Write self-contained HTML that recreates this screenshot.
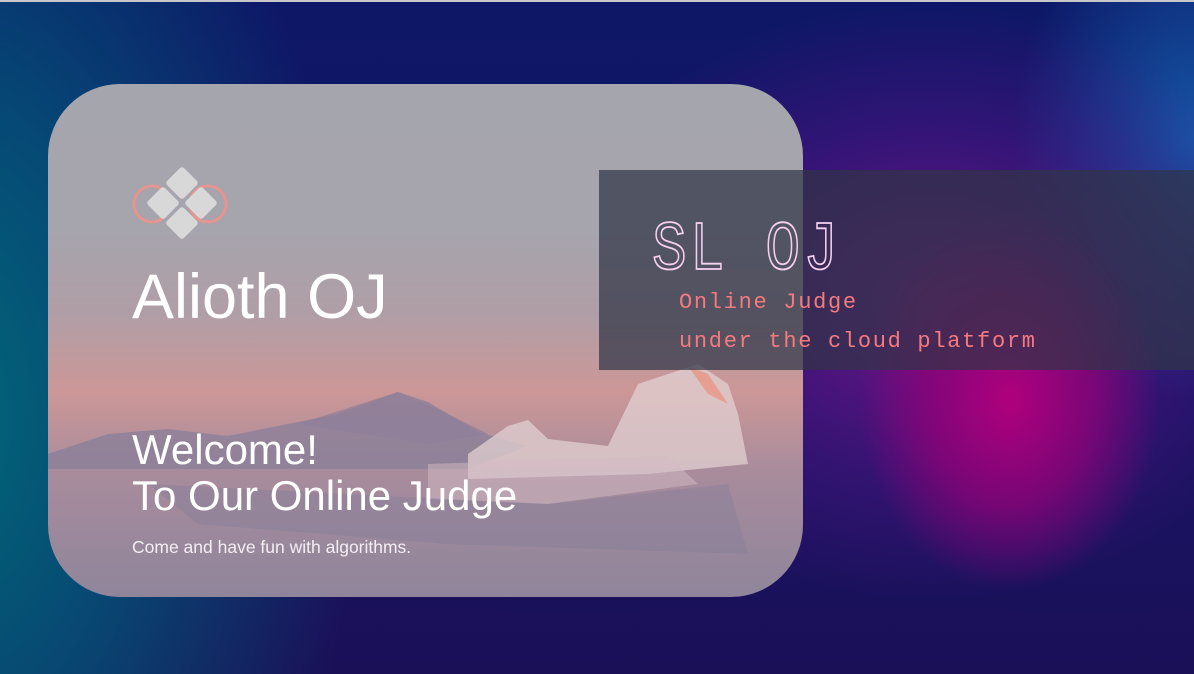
<!DOCTYPE html>
<html><head><meta charset="utf-8"><style>
html,body{margin:0;padding:0}
body{width:1194px;height:674px;overflow:hidden;position:relative;font-family:"Liberation Sans",sans-serif;
background:
radial-gradient(ellipse 150px 190px at 1010px 400px,rgba(175,0,125,1),rgba(150,0,120,0.7) 55%,rgba(100,0,110,0) 100%),
radial-gradient(ellipse 380px 300px at 930px 300px,rgba(120,20,140,0.9),rgba(90,20,140,0.4) 60%,rgba(80,20,130,0) 100%),
radial-gradient(ellipse 180px 260px at 1194px 140px,rgba(20,90,170,0.95),rgba(20,90,170,0) 100%),
radial-gradient(ellipse 420px 700px at -60px 420px,rgba(0,105,120,1),rgba(0,95,125,0.7) 45%,rgba(10,70,120,0) 100%),
linear-gradient(180deg,#0d1766 0%,#1a1566 50%,#1a1058 100%);}
.top{position:absolute;left:0;top:0;width:1194px;height:2px;background:#c8c8cc}
.card{position:absolute;left:48px;top:84px;width:755px;height:513px;border-radius:72px;overflow:hidden;
background:linear-gradient(180deg,#a5a5ad 0%,#a6a4ad 28%,#b09ea6 45%,#cc9797 60%,#a98c9c 75%,#8f859b 100%)}
.panel{position:absolute;left:599px;top:170px;width:595px;height:200px;background:rgba(48,52,70,0.72)}
.t{position:absolute;color:#fff;white-space:nowrap}
</style></head><body>
<div class="top"></div>
<div class="card">
<svg width="755" height="513" style="position:absolute;left:0;top:0">
<polygon points="0,370 60,350 120,345 180,352 290,330 350,308 380,318 430,348 480,362 420,385 0,385" fill="#857d98" opacity="0.7"/>
<polygon points="250,340 350,308 400,330 440,350 380,360" fill="#8e7f99" opacity="0.7"/>
<polygon points="420,370 460,342 480,336 500,355 560,362 590,300 620,290 650,280 680,300 690,330 700,380 600,390 420,395" fill="#e2d0d2" opacity="0.75"/>
<polygon points="640,282 660,290 680,320 660,310" fill="#e9907a" opacity="0.7"/>
<polygon points="380,380 620,372 650,400 500,420 380,415" fill="#d4bcc4" opacity="0.5"/>
<polygon points="100,400 500,420 680,400 700,470 400,460 150,440" fill="#7f7a98" opacity="0.35"/>
</svg>
<svg width="110" height="80" style="position:absolute;left:80px;top:80px" viewBox="0 0 110 80">
<circle cx="24" cy="40" r="18" fill="none" stroke="#e69590" stroke-width="3"/>
<circle cx="80" cy="40" r="18" fill="none" stroke="#e69590" stroke-width="3"/>
<g fill="#d8d8d8">
<rect x="42" y="7" width="24" height="24" rx="3" transform="rotate(45 54 19)"/>
<rect x="23" y="27" width="24" height="24" rx="3" transform="rotate(45 35 39)"/>
<rect x="61" y="27" width="24" height="24" rx="3" transform="rotate(45 73 39)"/>
<rect x="42" y="47" width="24" height="24" rx="3" transform="rotate(45 54 59)"/>
</g>
</svg>
<div class="t" style="left:84px;top:177px;font-size:63px;letter-spacing:0px">Alioth OJ</div>
<div class="t" style="left:84px;top:343px;font-size:42px;letter-spacing:0px;line-height:46px">Welcome!<br>To Our Online Judge</div>
<div class="t" style="left:84px;top:453px;font-size:17.5px;color:#f2eef2">Come and have fun with algorithms.</div>
</div>
<div class="panel"></div>
<div class="t" style="left:652px;top:222px;font-family:'Liberation Mono',monospace;font-size:58px;color:transparent;-webkit-text-stroke:1.5px #f6d0f0;letter-spacing:3px;transform:scaleY(1.2);transform-origin:left top;line-height:50px">SL OJ</div>
<div class="t" style="left:679px;top:283px;font-family:'Liberation Mono',monospace;font-size:22px;color:#f47a7e;letter-spacing:1.7px;line-height:39px">Online Judge<br>under the cloud platform</div>
</body></html>
